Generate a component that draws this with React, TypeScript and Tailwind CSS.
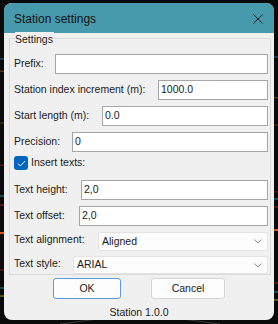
import { FC } from "react";

type FieldProps = {
  label: string;
  labelClass: string;
  value?: string;
  rowClass?: string;
};

const TextField: FC<FieldProps> = ({ label, labelClass, value, rowClass }) => {
  return (
    <div className={"flex items-center h-[20px] " + (rowClass ?? "")}>
      <span className={"shrink-0 whitespace-nowrap " + labelClass}>{label}</span>
      <div className="flex-1 h-full bg-white border border-[#a6a6a6] pl-[2px] leading-[17px]">
        {value}
      </div>
    </div>
  );
};

const Combo: FC<FieldProps> = ({ label, labelClass, value, rowClass }) => {
  return (
    <div className={"flex items-center " + (rowClass ?? "")}>
      <span className={"shrink-0 whitespace-nowrap -mt-[3px] " + labelClass}>{label}</span>
      <div className="flex-1 h-full flex items-center justify-between bg-[#fdfdfd] border border-[#e3e3e3] rounded-[3px] pl-[3px] pr-[5px]">
        <span>{value}</span>
        <svg width="8" height="5" viewBox="0 0 8 5" className="text-[#8a8a8a]">
          <path d="M0.5 0.5 L4 4 L7.5 0.5" fill="none" stroke="currentColor" strokeWidth="1" />
        </svg>
      </div>
    </div>
  );
};

export default function App() {
  return (
    <div className="relative w-[278px] h-[324px] overflow-hidden bg-[#0a0a0a] pl-[4px] pt-[3px] font-['Liberation_Sans',Arial,sans-serif] text-[#1b1b1b]">
      {/* CAD drawing behind the dialog */}
      <svg className="absolute inset-0" width="278" height="324" viewBox="0 0 278 324">
        <line x1="0" y1="59" x2="278" y2="57" stroke="#2a5ea8" strokeWidth="1" />
        <line x1="0" y1="71" x2="278" y2="98" stroke="#6a4a20" strokeWidth="1" />
        <line x1="0" y1="123" x2="278" y2="125" stroke="#5a3a18" strokeWidth="1" />
        <line x1="0" y1="165" x2="278" y2="192" stroke="#6a1a1a" strokeWidth="1" />
        <line x1="0" y1="196" x2="278" y2="199" stroke="#1f8f8a" strokeWidth="1" />
        <line x1="0" y1="205" x2="278" y2="207" stroke="#a01c1c" strokeWidth="1" />
        <line x1="0" y1="233" x2="278" y2="230" stroke="#e0501a" strokeWidth="2" />
        <line x1="0" y1="270" x2="278" y2="283" stroke="#8a1a1a" strokeWidth="1" />
        <line x1="0" y1="288" x2="278" y2="292" stroke="#1f8f8a" strokeWidth="1" />
        <line x1="0" y1="296" x2="278" y2="300" stroke="#9a9a20" strokeWidth="1" />
        <path d="M60 324 Q140 310 220 324" fill="none" stroke="#3a3a3a" strokeWidth="1" />
      </svg>

      <div className="relative w-[270px] h-[317px] rounded-[8px] overflow-hidden bg-[#f0f0f0] flex flex-col">
        {/* title bar */}
        <div className="h-[30px] shrink-0 bg-[#469aab] flex items-center justify-between pl-[10px] pr-[11px] pt-[2px]">
          <span className="text-[12px] text-[#141414]">Station settings</span>
          <svg width="10" height="10" viewBox="0 0 10 10" className="text-[#1a1a1a]">
            <path d="M0.5 0.5 L9.5 9.5 M9.5 0.5 L0.5 9.5" stroke="currentColor" strokeWidth="1" />
          </svg>
        </div>

        <div className="flex flex-col text-[10.5px]">
          {/* group box */}
          <div className="relative mt-[5px] ml-[5px] w-[262px] border border-[#dadada] pl-[4px] pr-[2px] pt-[15px]">
            <span className="absolute left-[5px] -top-[7px] bg-[#f0f0f0] leading-[14px] pr-[1px]">
              Settings
            </span>
            <TextField label="Prefix:" labelClass="w-[41px]" />
            <TextField label="Station index increment (m):" labelClass="w-[144px]" value="1000.0" rowClass="mt-[6px]" />
            <TextField label="Start length (m):" labelClass="w-[88px]" value="0.0" rowClass="mt-[6px]" />
            <TextField label="Precision:" labelClass="w-[58px]" value="0" rowClass="mt-[6px]" />

            <div className="flex items-center mt-[4px] h-[14px]">
              <div className="w-[14px] h-[14px] rounded-[3px] bg-[#0067c0] flex items-center justify-center">
                <svg width="9" height="7" viewBox="0 0 9 7">
                  <path d="M1 3.6 L3.4 6 L8 1" fill="none" stroke="#ffffff" strokeWidth="1" />
                </svg>
              </div>
              <span className="ml-[3px]">Insert texts:</span>
            </div>

            <TextField label="Text height:" labelClass="w-[67px]" value="2,0" rowClass="mt-[10px]" />
            <TextField label="Text offset:" labelClass="w-[65px]" value="2,0" rowClass="mt-[6px]" />
            <Combo label="Text alignment:" labelClass="w-[84px]" value="Aligned" rowClass="mt-[6px] h-[19px]" />
            <Combo label="Text style:" labelClass="w-[59px]" value="ARIAL" rowClass="mt-[5px] h-[18px]" />
          </div>

          {/* buttons */}
          <div className="flex justify-center gap-[30px] mt-[3px]">
            <button className="w-[68px] h-[21px] rounded-[3px] bg-[#fdfdfd] border border-[#5a9bd5] text-[10.5px]">
              OK
            </button>
            <button className="w-[74px] h-[21px] rounded-[3px] bg-[#fdfdfd] border border-[#d5d5d5] text-[10.5px]">
              Cancel
            </button>
          </div>

          <div className="mt-[6px] text-center leading-[14px]">Station 1.0.0</div>
        </div>
      </div>
    </div>
  );
}
